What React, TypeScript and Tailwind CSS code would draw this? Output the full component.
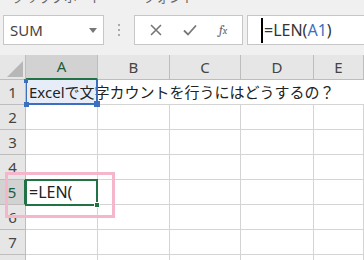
import React from "react";

const cols = ["A", "B", "C", "D", "E"];
const rows = [1, 2, 3, 4, 5, 6, 7, 8];
const font = { fontFamily: '"Noto Sans", "Noto Sans CJK JP", sans-serif' };

export default function App() {
  return (
    <div
      className="relative h-[260px] w-[364px] overflow-hidden bg-[#f0f0f0] text-[15px]"
      style={font}
    >
      {/* ribbon leftovers, only their bottoms peek in */}
      <div className="h-[15px] overflow-hidden">
        <div className="-mt-[12px] flex gap-10 pl-3 text-[13px] text-[#666]">
          <span>クリップボード</span>
          <span>フォント</span>
        </div>
      </div>

      {/* formula bar */}
      <div className="flex h-[30px] items-stretch">
        <div className="ml-[3px] flex w-[101px] items-center justify-between border border-[#c6c6c6] bg-white pl-[6px] pr-[6px] text-[#444]">
          <span>SUM</span>
          <svg width="8" height="5" viewBox="0 0 8 5">
            <path d="M0 0h8L4 5z" fill="#777" />
          </svg>
        </div>
        <div className="flex w-[30px] flex-col items-center justify-center gap-[3px]">
          <span className="h-[2px] w-[2px] bg-[#aaa]" />
          <span className="h-[2px] w-[2px] bg-[#aaa]" />
          <span className="h-[2px] w-[2px] bg-[#aaa]" />
        </div>
        <div className="flex w-[109px] items-center justify-around border border-[#c6c6c6] bg-white px-1">
          <svg width="12" height="12" viewBox="0 0 12 12">
            <path d="M1 1l10 10M11 1L1 11" stroke="#777" strokeWidth="1.6" />
          </svg>
          <svg width="14" height="12" viewBox="0 0 14 12">
            <path d="M1 6.5l4 4L13 1.5" stroke="#777" strokeWidth="1.8" fill="none" />
          </svg>
          <span className="font-serif text-[13px] italic text-[#666]">
            f<span className="text-[10px]">x</span>
          </span>
        </div>
        <div className="ml-[4px] flex flex-1 items-center border border-r-0 border-[#c6c6c6] bg-white pl-[13px] text-[16px] text-[#333]">
          <span className="mr-[1px] h-[25px] w-[2px] bg-black" />
          <span>=LEN(</span>
          <span className="text-[#3c6fc0]">A1</span>
          <span>)</span>
        </div>
      </div>

      <div className="h-[10px]" />

      {/* sheet grid */}
      <div className="grid grid-cols-[26px_72px_72px_71px_73px_1fr] grid-rows-[25px_repeat(8,25px)] bg-white text-[#222]">
        <div className="relative border-b border-r border-[#bdbdbd] bg-[#e6e6e6]">
          <svg className="absolute bottom-[2px] right-[2px]" width="16" height="16" viewBox="0 0 16 16">
            <path d="M16 0v16H0z" fill="#b7b7b7" />
          </svg>
        </div>
        {cols.map((c) => (
          <div
            key={c}
            className={
              c === "A"
                ? "flex items-center justify-center border-b-2 border-r border-b-[#217346] border-r-[#bdbdbd] bg-[#d2d2d2] text-[#1e5c3a]"
                : "flex items-center justify-center border-b border-r border-[#bdbdbd] bg-[#e6e6e6] text-[#444]"
            }
          >
            {c}
          </div>
        ))}

        {rows.map((r) => (
          <React.Fragment key={r}>
            <div
              className={
                r === 5
                  ? "flex items-center justify-center border-b border-r-2 border-b-[#bdbdbd] border-r-[#217346] bg-[#d2d2d2] text-[#1e5c3a]"
                  : "flex items-center justify-center border-b border-r border-[#bdbdbd] bg-[#e6e6e6] text-[#444]"
              }
            >
              {r < 8 ? r : null}
            </div>
            {cols.map((c) => {
              if (r === 1 && c === "A") {
                return (
                  <div
                    key={c}
                    className="relative z-10 flex items-center whitespace-nowrap border-b border-[#d4d4d4] bg-[#e6edf8] pl-[3px]"
                  >
                    <span className="relative z-10">Excelで文字カウントを行うにはどうするの？</span>
                  </div>
                );
              }
              if (r === 5 && c === "A") {
                return (
                  <div
                    key={c}
                    className="flex items-center border-b border-r border-[#d4d4d4] pl-[3px] text-[16px]"
                  >
                    =LEN(
                  </div>
                );
              }
              return (
                <div
                  key={c}
                  className={
                    r === 1
                      ? "border-b border-[#d4d4d4]"
                      : "border-b border-r border-[#d4d4d4]"
                  }
                />
              );
            })}
          </React.Fragment>
        ))}
      </div>

      {/* A1 reference highlight */}
      <div className="pointer-events-none absolute left-[26px] top-[80px] z-20 h-[25px] w-[72px] border-b-2 border-l border-r-2 border-[#3c6fc0]">
        <span className="absolute -bottom-[4px] -left-[3px] h-[5px] w-[5px] bg-[#3c6fc0]" />
        <span className="absolute -bottom-[4px] -right-[4px] h-[6px] w-[6px] bg-[#3c6fc0]" />
        <span className="absolute -left-[3px] -top-[1px] h-[4px] w-[4px] bg-[#3c6fc0]" />
      </div>

      {/* active cell A5 */}
      <div className="pointer-events-none absolute left-[25px] top-[179px] z-20 h-[27px] w-[73px] border-2 border-[#217346]">
        <span className="absolute -bottom-[4px] -right-[4px] h-[6px] w-[6px] border border-white bg-[#217346]" />
      </div>

      {/* annotation box */}
      <div className="pointer-events-none absolute left-[5px] top-[172px] z-30 h-[46px] w-[110px] border-[3px] border-[#f5b5ca]" />
    </div>
  );
}
